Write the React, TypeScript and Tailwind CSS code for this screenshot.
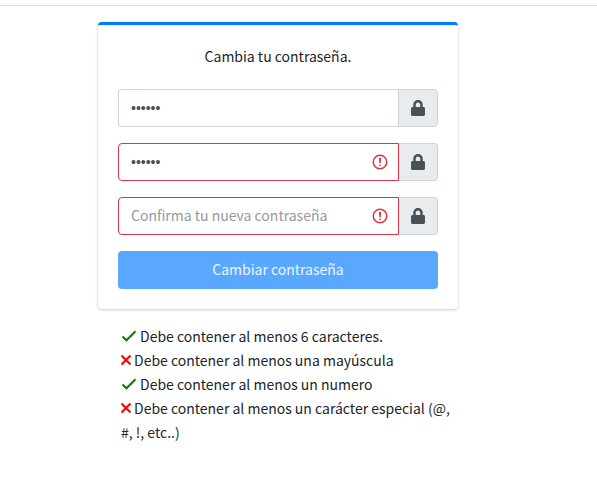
import { useState } from "react";
import { FaLock } from "react-icons/fa";

type FieldProps = {
  id: string;
  label: string;
  placeholder: string;
  initial?: string;
  invalid?: boolean;
};

function InvalidIcon() {
  return (
    <svg
      viewBox="0 0 12 12"
      className="pointer-events-none absolute right-[10px] top-[10px] size-[18px]"
      fill="none"
      stroke="#dc3545"
      aria-hidden="true"
    >
      <circle cx="6" cy="6" r="4.5" />
      <path strokeLinejoin="round" d="M5.8 3.6h.4L6 6.5z" />
      <circle cx="6" cy="8.2" r=".6" fill="#dc3545" stroke="none" />
    </svg>
  );
}

function PasswordField({ id, label, placeholder, initial = "", invalid = false }: FieldProps) {
  const [value, setValue] = useState(initial);
  return (
    <div className="mb-4 flex">
      <label htmlFor={id} className="sr-only">
        {label}
      </label>
      <div className="relative min-w-0 flex-1">
        <input
          id={id}
          type="password"
          value={value}
          onChange={(e) => setValue(e.target.value)}
          placeholder={placeholder}
          aria-invalid={invalid}
          className={`block h-[38px] w-full rounded-l border bg-white px-3 py-1 font-['Liberation_Sans',sans-serif] text-[14px] leading-6 text-[#495057] outline-none placeholder:font-['Noto_Sans_CJK_SC',sans-serif] placeholder:text-[#939ba2] ${
            invalid ? "border-[#dc3545] pr-9" : "border-[#ced4da] border-r-0"
          }`}
        />
        {invalid && <InvalidIcon />}
      </div>
      <span
        className={`flex h-[38px] items-center justify-center rounded-r border border-[#ced4da] bg-[#e9ecef] text-[#495057] ${
          invalid ? "w-[39px] border-l-0" : "w-10"
        }`}
      >
        <FaLock className="size-4" aria-hidden="true" />
      </span>
    </div>
  );
}

function Rule({ ok, children }: { ok: boolean; children: string }) {
  return (
    <li>
      {ok ? (
        <svg viewBox="0 0 16 16" className="mr-[3px] inline size-4 align-[-2px]" fill="none" stroke="#008000" strokeWidth="2" aria-hidden="true">
          <path d="M1.5 8.5 5.5 12.3 14.5 3.3" />
        </svg>
      ) : (
        <svg viewBox="0 0 12 16" className="mr-px inline h-4 w-3 align-[-2px]" fill="none" stroke="#ff0000" strokeWidth="2.1" aria-hidden="true">
          <path d="M.5 3.5 9.5 12.5M9.5 3.5 .5 12.5" />
        </svg>
      )}
      {children}
    </li>
  );
}

export default function App() {
  return (
    <div className="bg-white pt-[5px] font-['Noto_Sans_CJK_SC',sans-serif] text-[14px] leading-6 text-[#212529]">
      <hr className="border-[#dee2e6]" />
      <main className="mr-[41px] flex flex-col items-center pt-4">
        <div className="w-full max-w-[360px]">
          <section className="rounded border-t-3 border-[#007bff] bg-white px-5 pb-5 pt-[19px] shadow-[0_0_1px_rgba(0,0,0,0.13),0_1px_3px_rgba(0,0,0,0.2)]">
            <h1 className="pb-[21px] text-center">Cambia tu contraseña.</h1>
            <form onSubmit={(e) => e.preventDefault()}>
              <PasswordField id="current" label="Contraseña actual" placeholder="Contraseña actual" initial="abc123" />
              <PasswordField id="next" label="Nueva contraseña" placeholder="Nueva contraseña" initial="abc123" invalid />
              <PasswordField
                id="confirm"
                label="Confirma tu nueva contraseña"
                placeholder="Confirma tu nueva contraseña"
                invalid
              />
              <button
                type="submit"
                disabled
                className="block h-[38px] w-full rounded bg-[#59a7ff] pb-0.5 text-center text-[#edf6ff]"
              >
                Cambiar contraseña
              </button>
            </form>
          </section>
          <ul className="pl-[23px] pt-[15px]">
            <Rule ok>Debe contener al menos 6 caracteres.</Rule>
            <Rule ok={false}>Debe contener al menos una mayúscula</Rule>
            <Rule ok>Debe contener al menos un numero</Rule>
            <Rule ok={false}>Debe contener al menos un carácter especial (@, #, !, etc..)</Rule>
          </ul>
        </div>
      </main>
    </div>
  );
}
